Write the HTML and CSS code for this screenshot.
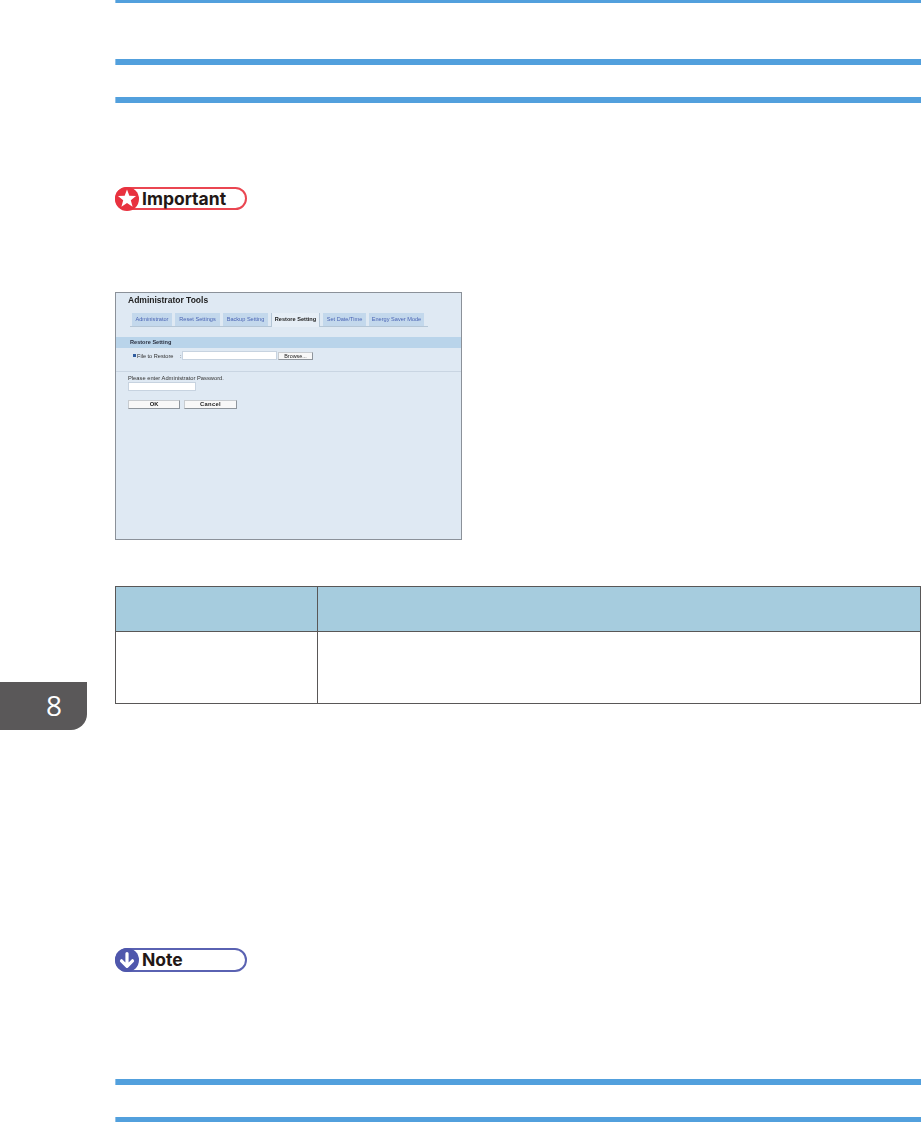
FILE: index.html
```html
<!DOCTYPE html>
<html lang="en">
<head>
<meta charset="utf-8">
<title>Restore Setting</title>
<link rel="stylesheet" href="styles.css">
</head>
<body>
<div class="chapter-tab">8</div>
<main class="page">
  <div class="rule rule-top"></div>
  <div class="rule rule-h2a"></div>
  <div class="rule rule-h2b"></div>

  <div class="badge badge-important">
    <svg class="badge-icon" viewBox="0 0 24 24" aria-hidden="true">
      <circle cx="12" cy="12" r="12" fill="#e8323f"/>
      <path fill="#fff" d="M12 2.5L14.35 8.76L21.03 9.06L15.8 13.24L17.58 19.69L12 16L6.42 19.69L8.2 13.24L2.97 9.06L9.65 8.76Z"/>
    </svg>
    <span class="badge-text">Important</span>
  </div>

  <section class="shot">
    <h1 class="shot-title">Administrator Tools</h1>
    <nav class="tabs">
      <span class="tab">Administrator</span>
      <span class="tab">Reset Settings</span>
      <span class="tab">Backup Setting</span>
      <span class="tab tab-active">Restore Setting</span>
      <span class="tab">Set Date/Time</span>
      <span class="tab">Energy Saver Mode</span>
    </nav>
    <div class="band">Restore Setting</div>
    <div class="file-row">
      <span class="bullet"></span>
      <span class="file-label">File to Restore</span>
      <span class="colon">:</span>
      <span class="field field-file"></span>
      <span class="btn btn-browse">Browse...</span>
    </div>
    <div class="divider"></div>
    <div class="pw-block">
      <div class="pw-label">Please enter Administrator Password.</div>
      <span class="field field-pw"></span>
      <div class="actions">
        <span class="btn btn-action">OK</span>
        <span class="btn btn-action btn-cancel">Cancel</span>
      </div>
    </div>
  </section>

  <table class="info">
    <tr class="info-head"><th class="col-a"></th><th></th></tr>
    <tr class="info-row"><td class="col-a"></td><td></td></tr>
  </table>

  <div class="badge badge-note">
    <svg class="badge-icon" viewBox="0 0 24 24" aria-hidden="true">
      <circle cx="12" cy="12" r="12" fill="#4f57ac"/>
      <path fill="none" stroke="#fff" stroke-width="3.2" stroke-linecap="round" stroke-linejoin="round" d="M12 5.5V18M6.5 12.8L12 18.3L17.5 12.8"/>
    </svg>
    <span class="badge-text">Note</span>
  </div>

  <div class="rule rule-h2c"></div>
  <div class="rule rule-h2d"></div>
</main>
</body>
</html>
```
FILE: styles.css
```css
html, body {
  margin: 0;
  padding: 0;
  background: #fff;
  height: 1122px;
  overflow: hidden;
}
body {
  position: relative;
  font-family: "Liberation Sans", Arial, sans-serif;
}
.page {
  margin-left: 115px;
  width: 806px;
  display: flex;
  flex-direction: column;
}
.chapter-tab {
  position: absolute;
  left: 0;
  top: 682px;
  width: 87px;
  height: 48px;
  box-sizing: border-box;
  padding: 5px 25px 0 0;
  text-align: right;
  background: #5a5859;
  border-bottom-right-radius: 16px;
  color: #fff;
  font: 400 28px/37px "Open Sans", sans-serif;
}
.rule {
  flex: none;
  height: 6px;
  box-sizing: border-box;
  background: #52a0dd;
  border-left: 1px solid #90c1e9;
}
.rule-top { height: 3px; }
.rule-h2a { margin-top: 56px; }
.rule-h2b { margin-top: 32px; }
.rule-h2c { margin-top: 107px; }
.rule-h2d { margin-top: 32px; }

.badge {
  flex: none;
  box-sizing: border-box;
  width: 132px;
  height: 23px;
  border: 2px solid;
  border-radius: 12px;
  display: flex;
  align-items: center;
  background: #fff;
}
.badge-important { margin-top: 84px; border-color: #ea4651; }
.badge-note { margin-top: 244px; height: 24px; border-color: #5a62b2; }
.badge-icon {
  flex: none;
  width: 24px;
  height: 24px;
  margin-left: -2px;
}
.badge-text {
  margin-left: 3px;
  color: #231815;
  font: 700 17.5px/20px Inter, sans-serif;
}

.shot {
  flex: none;
  box-sizing: border-box;
  margin-top: 82px;
  width: 347px;
  height: 248px;
  border: 1px solid #8b9199;
  background: #dfe9f3;
  filter: blur(0.45px);
  overflow: hidden;
}
.shot-title {
  margin: 3px 0 0 12px;
  font-size: 8.5px;
  line-height: 9px;
  font-weight: 700;
  color: #222;
}
.tabs {
  margin: 8px 33px 0 14px;
  padding-left: 2px;
  display: grid;
  grid-template-columns: 40px 45px 45px 49px 43px 55px;
  justify-content: start;
  column-gap: 3px;
  height: 13px;
  border-bottom: 1px solid #b5c6d6;
}
.tab {
  height: 13px;
  background: #c3d8ec;
  color: #4a64b4;
  font-size: 5.6px;
  line-height: 13px;
  text-align: center;
  white-space: nowrap;
}
.tab-active {
  height: 14px;
  box-sizing: border-box;
  background: #e6eef6;
  color: #222;
  font-weight: 700;
  border-right: 1px solid #b5c6d6;
  border-left: 1px solid #b5c6d6;
}
.band {
  margin-top: 10px;
  height: 11px;
  padding-left: 14px;
  background: #b9d4ea;
  color: #2a3040;
  font-size: 5.6px;
  font-weight: 700;
  line-height: 11px;
}
.file-row {
  margin-top: 3px;
  padding-left: 17px;
  display: flex;
  align-items: center;
  height: 9px;
  color: #333;
  font-size: 5.6px;
  line-height: 8px;
}
.bullet {
  flex: none;
  width: 3px;
  height: 3px;
  margin-right: 1px;
  background: #2f5c9e;
}
.file-label { flex: none; width: 43px; }
.colon { flex: none; width: 2px; }
.field {
  display: block;
  box-sizing: border-box;
  background: #fff;
  border: 1px solid #c7d3e0;
}
.field-file { flex: none; width: 95px; height: 9px; }
.btn {
  display: block;
  box-sizing: border-box;
  background: #f8f8f8;
  border: 1px solid #8e959c;
  border-top-color: #c8ccd0;
  border-left-color: #c8ccd0;
  text-align: center;
  color: #222;
}
.btn-browse {
  flex: none;
  width: 35px;
  height: 8px;
  margin-left: 1px;
  font-size: 5.4px;
  line-height: 6px;
}
.divider {
  margin-top: 11px;
  height: 1px;
  background: #c9d5e2;
}
.pw-block { padding-left: 12px; }
.pw-label {
  margin-top: 3px;
  color: #333;
  font-size: 5.75px;
  line-height: 7px;
}
.field-pw { width: 68px; height: 9px; margin-top: 0; }
.actions {
  margin-top: 9px;
  display: flex;
  gap: 4px;
}
.btn-action {
  width: 52px;
  height: 9px;
  font-size: 5.8px;
  font-weight: 700;
  line-height: 7px;
}
.btn-cancel { width: 53px; letter-spacing: 0.3px; }

.info {
  flex: none;
  margin-top: 46px;
  width: 806px;
  height: 118px;
  table-layout: fixed;
  border-collapse: separate;
  border-spacing: 0;
  border-top: 1px solid #595757;
  border-left: 1px solid #595757;
}
.info th, .info td {
  padding: 0;
  border-right: 1px solid #595757;
  border-bottom: 1px solid #595757;
}
.col-a { width: 201px; }
.info-head { height: 45px; }
.info-head th { background: #a6ccde; }
.info-row { height: 72px; }
```
